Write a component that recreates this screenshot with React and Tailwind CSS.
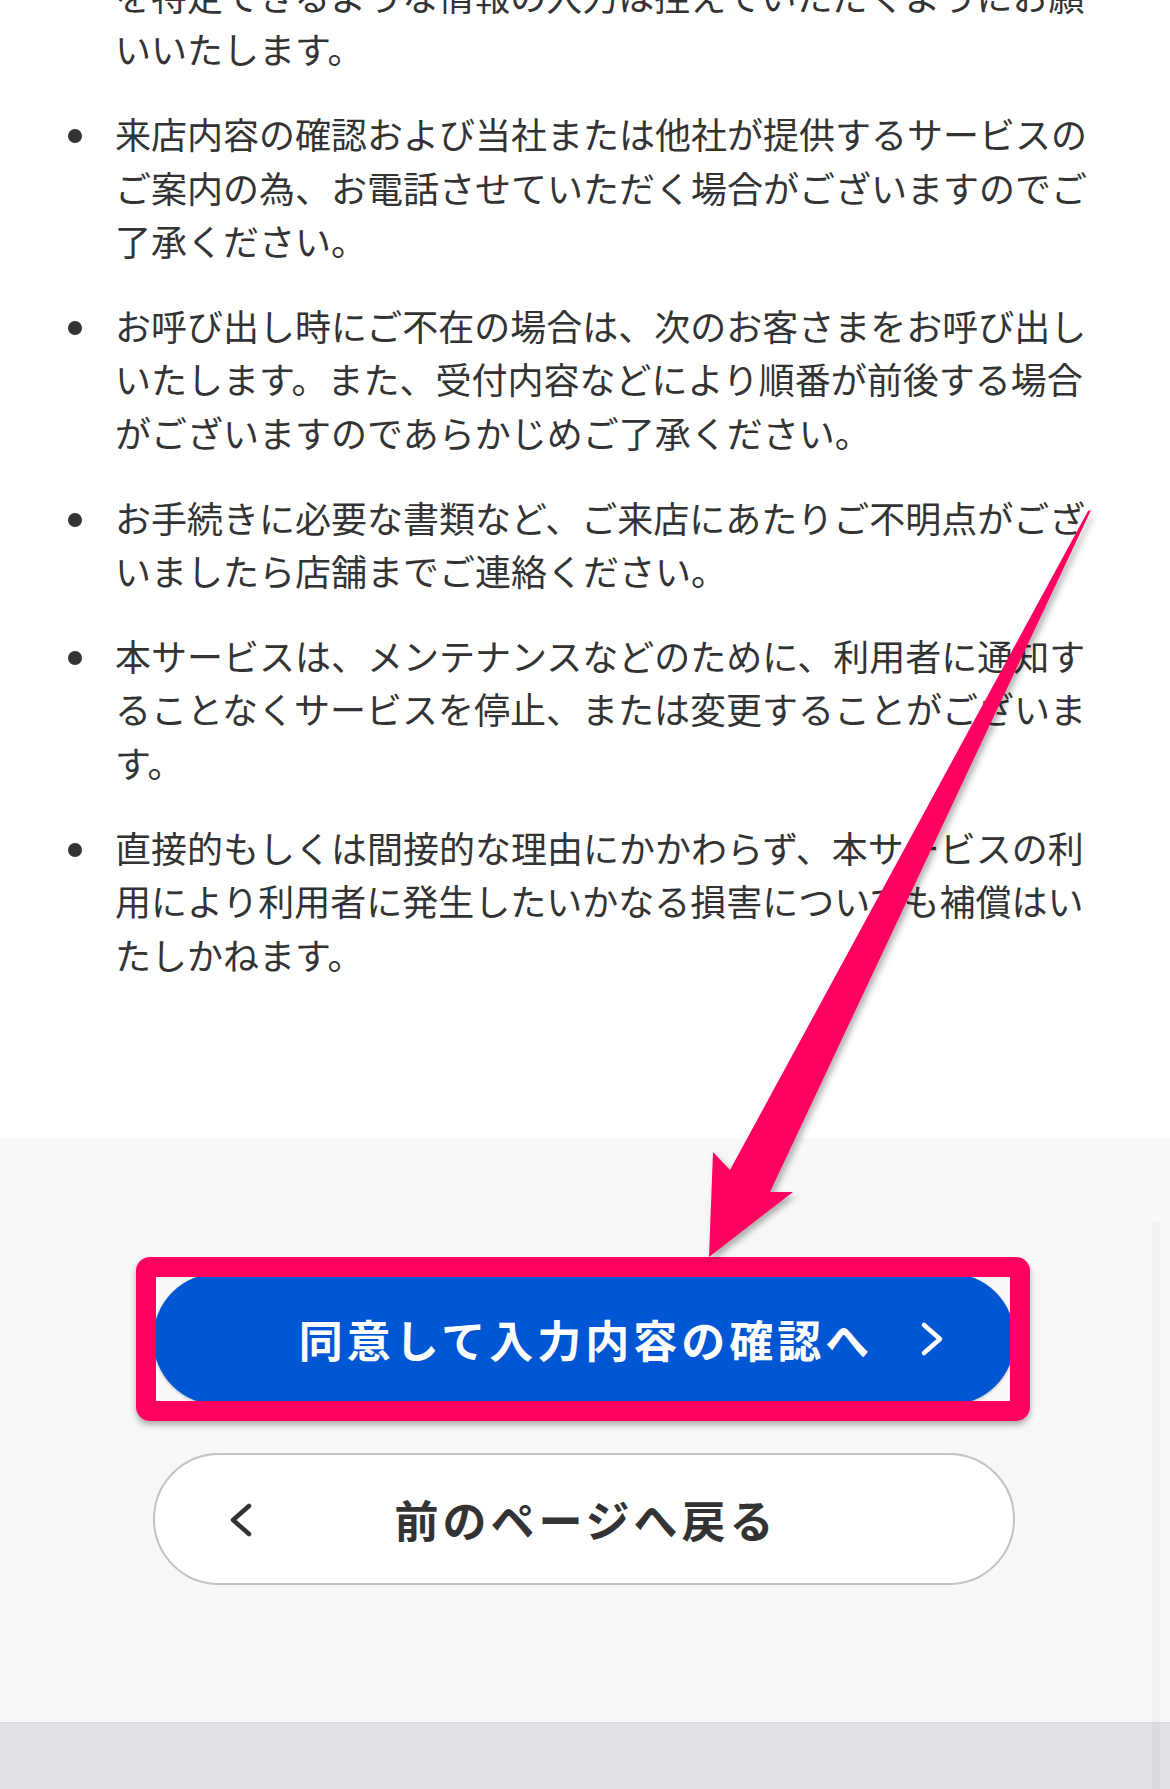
import React from "react";

const items = [
  { bullet: false, lines: ["を特定できるような情報の入力は控えていただくようにお願", "いいたします。"] },
  { bullet: true, lines: ["来店内容の確認および当社または他社が提供するサービスの", "ご案内の為、お電話させていただく場合がございますのでご", "了承ください。"] },
  { bullet: true, lines: ["お呼び出し時にご不在の場合は、次のお客さまをお呼び出し", "いたします。また、受付内容などにより順番が前後する場合", "がございますのであらかじめご了承ください。"] },
  { bullet: true, lines: ["お手続きに必要な書類など、ご来店にあたりご不明点がござ", "いましたら店舗までご連絡ください。"] },
  { bullet: true, lines: ["本サービスは、メンテナンスなどのために、利用者に通知す", "ることなくサービスを停止、または変更することがございま", "す。"] },
  { bullet: true, lines: ["直接的もしくは間接的な理由にかかわらず、本サービスの利", "用により利用者に発生したいかなる損害についても補償はい", "たしかねます。"] },
];

export default function App() {
  return (
    <div
      className="relative w-[1170px] h-[1789px] overflow-hidden bg-white text-[#333333]"
      style={{ fontFamily: '"Noto Sans CJK JP", "Noto Sans", sans-serif' }}
    >
      {/* White notes section */}
      <div className="h-[1138px] overflow-hidden bg-white">
        <div className="flex flex-col gap-[31.5px] pl-[68px] mt-[-31px]">
          {items.map((it, i) => (
            <div key={i} className="flex">
              <div className="w-[47px] shrink-0">
                {it.bullet && (
                  <span className="block w-[14px] h-[14px] rounded-full bg-[#333333] mt-[22px]" />
                )}
              </div>
              <div className="text-[36px] leading-[53.4px]">
                {it.lines.map((l, j) => (
                  <span key={j} className="block whitespace-nowrap">
                    {l}
                  </span>
                ))}
              </div>
            </div>
          ))}
        </div>
      </div>

      {/* Gray buttons section */}
      <div className="h-[584px] bg-[#f8f8f8] flex flex-col items-center pt-[135px] gap-[48px]">
        <div className="relative w-[862px] h-[132px] ml-[-2px]">
          <button className="relative w-full h-full rounded-full bg-[#0056d3] shadow-[0_1px_3px_rgba(0,0,0,0.25)] flex items-center justify-center">
            <span className="text-white font-bold text-[44px] tracking-[4px] pl-[4px]">同意して入力内容の確認へ</span>
            <svg className="absolute left-[767px] top-[48px]" width="26" height="36" viewBox="0 0 26 36">
              <polyline points="4,4 20,18 4,32" fill="none" stroke="white" strokeWidth="4.5" strokeLinecap="round" strokeLinejoin="round" />
            </svg>
          </button>
          <div className="absolute left-[-17px] top-[-16px] right-[-15px] bottom-[-16px] border-[20px] border-[#ff0060] rounded-[14px] shadow-[0_4px_6px_rgba(0,0,0,0.3)]" />
        </div>

        <button className="relative w-[862px] h-[132px] ml-[-2px] rounded-full bg-white border-2 border-[#c2c2c2] flex items-center justify-center">
          <svg className="absolute left-[74px] top-[47px]" width="26" height="36" viewBox="0 0 26 36">
            <polyline points="20,4 4,18 20,32" fill="none" stroke="#333333" strokeWidth="4.5" strokeLinecap="round" strokeLinejoin="round" />
          </svg>
          <span className="text-[#333333] font-bold text-[44px] tracking-[4px] pl-[4px]">前のページへ戻る</span>
        </button>
      </div>

      {/* Bottom bar */}
      <div className="h-[67px] bg-[#e3e0e6] border-t border-[#dcd9df]" />

      {/* Right edge scroll strip */}
      <div className="absolute left-[1152px] top-[1222px] bottom-0 w-[8px] bg-black/[0.03]" />

      {/* Annotation arrow */}
      <svg className="absolute inset-0 pointer-events-none" width="1170" height="1789" viewBox="0 0 1170 1789">
        <defs>
          <filter id="ash" x="-20%" y="-20%" width="140%" height="140%">
            <feDropShadow dx="3" dy="4" stdDeviation="3" floodColor="#000000" floodOpacity="0.3" />
          </filter>
        </defs>
        <polygon
          points="1091,510 770,1192 793,1192 709,1257 713,1152 730,1170 1088,511"
          fill="#ff0060"
          filter="url(#ash)"
        />
      </svg>
    </div>
  );
}
